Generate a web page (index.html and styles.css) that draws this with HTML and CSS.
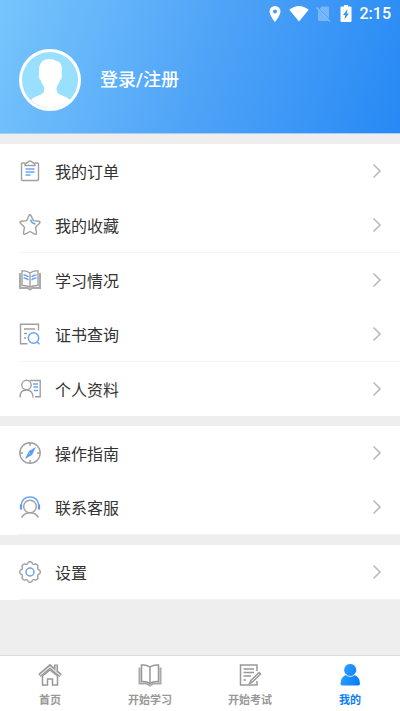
FILE: index.html
```html
<!DOCTYPE html>
<html lang="zh-CN">
<head>
<meta charset="utf-8">
<meta name="viewport" content="width=device-width, initial-scale=1">
<title>我的</title>
<link rel="stylesheet" href="styles.css">
</head>
<body>
<svg class="defs" aria-hidden="true">
  <symbol id="chevron" viewBox="0 0 10 16"><path d="M1.500 1.500 8 8l-6.500 6.500" fill="none" stroke="#bcbcbc" stroke-width="1.700"/></symbol>
</svg>
<header class="hero">
  <div class="status">
    <svg width="12" height="16" viewBox="0 0 12 16"><path fill="#fff" fill-rule="evenodd" d="M6 0a5.500 5.500 0 0 0-5.500 5.500C.5 9.500 6 16 6 16s5.500-6.500 5.500-10.500A5.500 5.500 0 0 0 6 0zm0 3.500a2 2 0 1 1 0 4 2 2 0 0 1 0-4z"/></svg>
    <svg class="wifi" width="20" height="16" viewBox="0 0 20 16"><path fill="#fff" d="M.3 3.800Q10-3.800 19.700 3.800L10 15.500z"/></svg>
    <svg class="sim" width="15" height="16" viewBox="0 0 15 16"><path fill="#fff" opacity=".3" d="M5.500.5H12q1 0 1 1v11L3.500 3zM2 4.500l10.500 10.500H3q-1 0-1-1z"/><path d="M.5 1.500l13.500 14" stroke="#fff" opacity=".4" stroke-width="1.200"/></svg>
    <svg class="battery" width="12" height="17" viewBox="0 0 12 17"><path fill="#fff" fill-rule="evenodd" d="M4 0h4v1.500h2.500q1 0 1 1V16q0 1-1 1h-9q-1 0-1-1V2.500q0-1 1-1H4zM7.500 4L3 10h2.300L4.500 14.500 9 8.500H6.700z"/></svg>
    <span class="clock">2:15</span>
  </div>
  <a class="profile" href="#login">
    <svg class="avatar" viewBox="0 0 62 62">
      <circle cx="31" cy="31" r="31" fill="#fff"/>
      <circle cx="31" cy="31" r="28" fill="#99dfff"/>
      <path fill="#fff" d="M12 51c3-4 9-4 12-7 1.500-2 1.500-5 .3-7.500-1.600-1.700-2-3.500-2.600-5.500-2-.8-2.200-4.500-1.500-6-.8-6 .3-10 3-12.500 4-3.500 11-3 14-.5 5 .5 6.500 5 5.300 13 .8 1.500.5 5.200-1.500 6-.6 2-1 4-2.600 5.500-1.200 2.500-1.200 5.500.3 7.500 3 3 9.500 3.500 12.300 7A28 28 0 0 1 12 51z"/>
    </svg>
    <span class="login">登录/注册</span>
  </a>
</header>
<main>
  <section class="group">
    <a class="row" href="#orders">
      <svg class="icon" viewBox="0 0 22 22"><path class="g" d="M6 3H3.500Q2.500 3 2.500 4v15.500q0 1 1 1h15q1 0 1-1V4q0-1-1-1H16M6 5.500h10q0-2.500-2.500-3Q12.500 1 11 1T8.500 2.500Q6 3 6 5.500z"/><path class="b" d="M6.500 9h9M6.500 12h9M6.500 15h5"/></svg>
      <span>我的订单</span><svg class="chev"><use href="#chevron"/></svg></a>
    <a class="row" href="#favorites">
      <svg class="icon" viewBox="0 0 22 22"><path class="g" stroke-linejoin="round" d="M11 .8q.7 0 1.100.9l2.300 4.900 5.400.7q2 .5.700 2l-4 3.900 1 5.600q0 2-1.700 1.300L11 17.500l-4.800 2.600q-1.700.7-1.700-1.300l1-5.600-4-3.900q-1.300-1.500.7-2l5.400-.7L9.900 1.700q.4-.9 1.100-.9z"/><path class="b" d="M11.500 5.500q1 4 5 4.500"/></svg>
      <span>我的收藏</span><svg class="chev"><use href="#chevron"/></svg></a>
    <hr>
    <a class="row" href="#study">
      <svg class="icon" viewBox="0 0 22 22"><path d="M1 4v15h7.500L11 20.500l2.500-1.500H21V4" fill="none" stroke="#aaa" stroke-width="2"/><path class="g book" d="M11 4Q7.500 1.500 3 2v14.500q5-.3 8 1.700 3-2 8-1.700V2q-4.500-.5-8 2zv14"/><path class="b" d="M4.500 6q3 .2 5 1.800M4.500 9q3 .2 5 1.800M17.500 6q-3 .2-5 1.800M17.500 9q-3 .2-5 1.800"/></svg>
      <span>学习情况</span><svg class="chev"><use href="#chevron"/></svg></a>
    <a class="row" href="#certificates">
      <svg class="icon" viewBox="0 0 22 22"><path class="g" d="M19.500 7.500V1.200h-18v19.600h7M5 6h11M5 10.500h3M5 15h2"/><circle class="b" cx="14.500" cy="15" r="5.200"/><path class="b" d="M18 18.700l2.500 2.500"/></svg>
      <span>证书查询</span><svg class="chev"><use href="#chevron"/></svg></a>
    <hr>
    <a class="row" href="#personal">
      <svg class="icon" viewBox="0 0 22 22"><circle class="g" cx="7.500" cy="7" r="4.700"/><path class="g" d="M1 19.500q0-7.500 6.500-7.500t6.500 7.500M10.500 2.500h10.700v16.200H16"/><path class="b" d="M14 6h5M14.500 9H19M15 12.500h4"/></svg>
      <span>个人资料</span><svg class="chev"><use href="#chevron"/></svg></a>
  </section>
  <section class="group">
    <a class="row" href="#guide">
      <svg class="icon" viewBox="0 0 22 22"><circle class="g" cx="11" cy="11" r="10.200"/><path class="g" d="M11 1v3M11 18v3M1 11h3M18 11h3"/><path fill="#5c9cf8" d="M17 5l-4 8-7 4 4-8z"/><path d="M9.800 10.800l1.500 1.300" stroke="#fff" stroke-width=".6"/></svg>
      <span>操作指南</span><svg class="chev"><use href="#chevron"/></svg></a>
    <a class="row" href="#service">
      <svg class="icon" viewBox="0 0 22 22"><path class="b" d="M2 11V9.500Q3.200 1 11 1t9 8.500V11"/><path d="M2 8.500v5M20 8.500v5" stroke="#5c9cf8" stroke-width="2.200"/><circle class="g" cx="11" cy="10.500" r="6.300"/><path class="g" d="M2.500 21.500q3-4.700 8.500-4.700t8.500 4.700"/></svg>
      <span>联系客服</span><svg class="chev"><use href="#chevron"/></svg></a>
    <hr>
  </section>
  <section class="group">
    <a class="row" href="#settings">
      <svg class="icon" viewBox="-11 -11 22 22"><path class="g" stroke-linejoin="round" d="M9.750 1.720Q6.500 2.700 8.110 5.680 7.700 7.700 5.680 8.110 2.700 6.500 1.720 9.750 0 10.900-1.720 9.750-2.700 6.500-5.680 8.110-7.700 7.700-8.110 5.680-6.500 2.700-9.750 1.720-10.900 0-9.750-1.720-6.500-2.700-8.110-5.680-7.700-7.700-5.680-8.110-2.700-6.500-1.720-9.750 0-10.900 1.720-9.750 2.700-6.500 5.680-8.110 7.700-7.700 8.110-5.680 6.500-2.700 9.750-1.720 10.900 0 9.750 1.720z"/><circle class="b" r="4"/></svg>
      <span>设置</span><svg class="chev"><use href="#chevron"/></svg></a>
    <hr>
  </section>
</main>
<nav class="tabs">
  <a href="#home"><svg class="tab-icon" viewBox="0 0 24 24"><path d="M1.500 12.500L12 3.500l10.500 9M18 7.500v-6" fill="none" stroke="#999" stroke-width="4"/><path d="M2 12.200L12 3.700l10 8.500M18 8V2.500" fill="none" stroke="#e4e4e4" stroke-width="1.200"/><path class="t" d="M4.500 13v9h5v-6h5v6h5v-9L12 7z"/></svg><span>首页</span></a>
  <a href="#learn"><svg class="tab-icon" viewBox="0 0 24 24"><path d="M1.500 4.500v16h7l3.500 2 3.500-2h7v-16" fill="none" stroke="#aaa" stroke-width="2"/><path class="t book" d="M12 4Q8.500 1.500 3.500 2v16.500q5.500-.3 8.500 1.800 3-2.100 8.500-1.800V2q-5-.5-8.500 2zv16"/></svg><span>开始学习</span></a>
  <a href="#exam"><svg class="tab-icon" viewBox="0 0 24 24"><path class="t" d="M19 8V2H2.500v20H19v-4M5.500 6H16M5.500 9.500H16M5.500 13H13M5.500 17H8"/><path class="t" d="M21 9.500l1.500 1.500-8 8-3 1.500 1.500-3z"/></svg><span>开始考试</span></a>
  <a class="active" href="#me" aria-current="page"><svg class="tab-icon" viewBox="0 0 24 24"><defs><linearGradient id="me" x1="0" x2="1" y1=".2" y2=".6"><stop stop-color="#30a5ff"/><stop offset="1" stop-color="#0a7dfb"/></linearGradient></defs><path fill="url(#me)" d="M12.200 1a6 6 0 0 0-3.600 10.800Q2.500 14 2.500 20.500q0 2 1.500 2h16.500q1.500 0 1.500-2 0-6.500-6.200-8.700A6 6 0 0 0 12.200 1z"/><path d="M7.500 11.500q4.700 4 9.400 0" fill="none" stroke="#fff" stroke-width=".8"/></svg><span>我的</span></a>
</nav>
</body>
</html>
```
FILE: styles.css
```css
* { box-sizing: border-box; }

body {
  margin: 0;
  min-height: 100vh;
  display: flex;
  flex-direction: column;
  background: #eee;
  color: #333;
  font-family: Roboto, "Noto Sans CJK SC", sans-serif;
}

a { color: inherit; text-decoration: none; }
svg { display: block; flex: none; }
.defs { position: absolute; width: 0; height: 0; }

.hero {
  background: linear-gradient(108deg, #77c5fc 0%, #50a4f7 50%, #2789f5 100%);
  border-bottom: 1px solid #a8cdf3;
  color: #fff;
  padding-bottom: 22px;
}

.status {
  display: flex;
  justify-content: flex-end;
  align-items: center;
  height: 27px;
  padding-right: 9px;
}
.wifi { margin-left: 8px; }
.sim { margin-left: 7px; }
.battery { margin-left: 9px; }
.clock {
  margin-left: 8px;
  font-size: 16px;
  font-weight: 500;
  line-height: 20px;
}

.profile {
  display: flex;
  align-items: center;
  gap: 19px;
  margin-top: 22px;
  padding-left: 19px;
}
.avatar { width: 62px; height: 62px; }
.login { font-size: 18px; font-weight: 500; line-height: 24px; }

main {
  flex: 1;
  display: flex;
  flex-direction: column;
  gap: 10px;
  padding-top: 10px;
}
.group { background: #fff; }
.group hr {
  height: 1px;
  margin: 0 0 0 19px;
  border: 0;
  background: #f3f3f3;
}
.row {
  display: flex;
  align-items: center;
  height: 54px;
  padding: 0 18px 0 19px;
  font-size: 16px;
}
.row span { flex: 1; margin-left: 14px; }
.icon { width: 22px; height: 22px; }
.chev { width: 10px; height: 16px; }
.g { fill: none; stroke: #a0a0a0; stroke-width: 1.4; }
.b { fill: none; stroke: #68a4fa; stroke-width: 1.5; }
.book { fill: #fff; }

.tabs {
  display: grid;
  grid-template-columns: repeat(4, 1fr);
  height: 56px;
  border-top: 1px solid #ddd;
  background: #fff;
  color: #999;
}
.tabs a {
  display: flex;
  flex-direction: column;
  align-items: center;
  gap: 6px;
  padding-top: 7px;
  font-size: 11px;
  font-weight: 700;
  line-height: 16px;
}
.tabs .active { color: #0a7dfb; }
.tab-icon { width: 24px; height: 24px; }
.t { fill: none; stroke: #999; stroke-width: 1.5; }
.t.book { fill: #fff; }
```
